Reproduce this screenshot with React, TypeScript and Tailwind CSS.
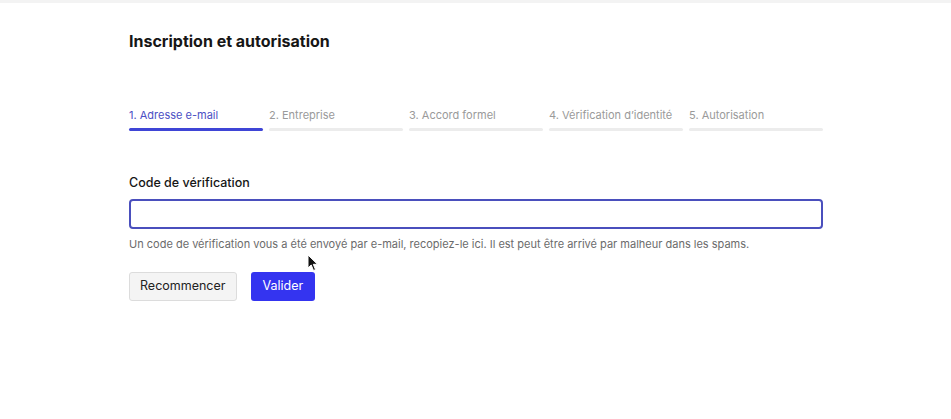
import React from "react";

const steps = [
  "1. Adresse e-mail",
  "2. Entreprise",
  "3. Accord formel",
  "4. Vérification d’identité",
  "5. Autorisation",
];

export default function App() {
  return (
    <div
      className="relative w-[951px] h-[419px] bg-white overflow-hidden"
      style={{ fontFamily: "Inter, 'Noto Sans', sans-serif" }}
    >
      <div className="h-[3px] bg-[#f3f3f3]" />
      <div className="ml-[129px] w-[694px]">
        <h1 className="mt-[28px] text-[16px] font-bold text-[#161616] leading-[20px]">
          Inscription et autorisation
        </h1>
        <div className="mt-[57px] grid grid-cols-5 gap-[6px]">
          {steps.map((s, i) => (
            <div key={s} className="flex flex-col">
              <span
                className={`text-[11px] leading-[14px] whitespace-nowrap ${
                  i === 0 ? "text-[#4b4fc4]" : "text-[#9a9a9a]"
                }`}
              >
                {s}
              </span>
              <div
                className={`mt-[6px] h-[3px] rounded-full ${
                  i === 0 ? "bg-[#3f45d6]" : "bg-[#ececec]"
                }`}
              />
            </div>
          ))}
        </div>
        <label className="block mt-[44px] text-[12.5px] font-medium text-[#161616] leading-[16px]">
          Code de vérification
        </label>
        <input
          className="mt-[8px] block w-full h-[30px] rounded-[4px] border-2 border-[#4a4fbd] outline-none px-2 text-[13px]"
          type="text"
        />
        <p className="mt-[8px] text-[11px] leading-[14px] text-[#6b6b6b]">
          Un code de vérification vous a été envoyé par e-mail, recopiez-le ici. Il est peut être arrivé par malheur dans les spams.
        </p>
        <div className="mt-[21px] flex gap-[14px]">
          <button className="h-[29px] px-[10px] rounded-[3px] border border-[#dcdcdc] bg-[#f4f4f4] text-[12.5px] text-[#222]">
            Recommencer
          </button>
          <button className="h-[29px] px-[12px] rounded-[3px] bg-[#3434f0] text-[12.5px] text-white">
            Valider
          </button>
        </div>
      </div>
      <svg
        className="absolute left-[307px] top-[254px]"
        width="12"
        height="18"
        viewBox="0 0 12 18"
      >
        <path
          d="M1 1 L1 14 L4.2 11 L6.5 16.5 L8.5 15.6 L6.3 10.3 L10.5 10.3 Z"
          fill="#111"
          stroke="#fff"
          strokeWidth="1"
        />
      </svg>
    </div>
  );
}
